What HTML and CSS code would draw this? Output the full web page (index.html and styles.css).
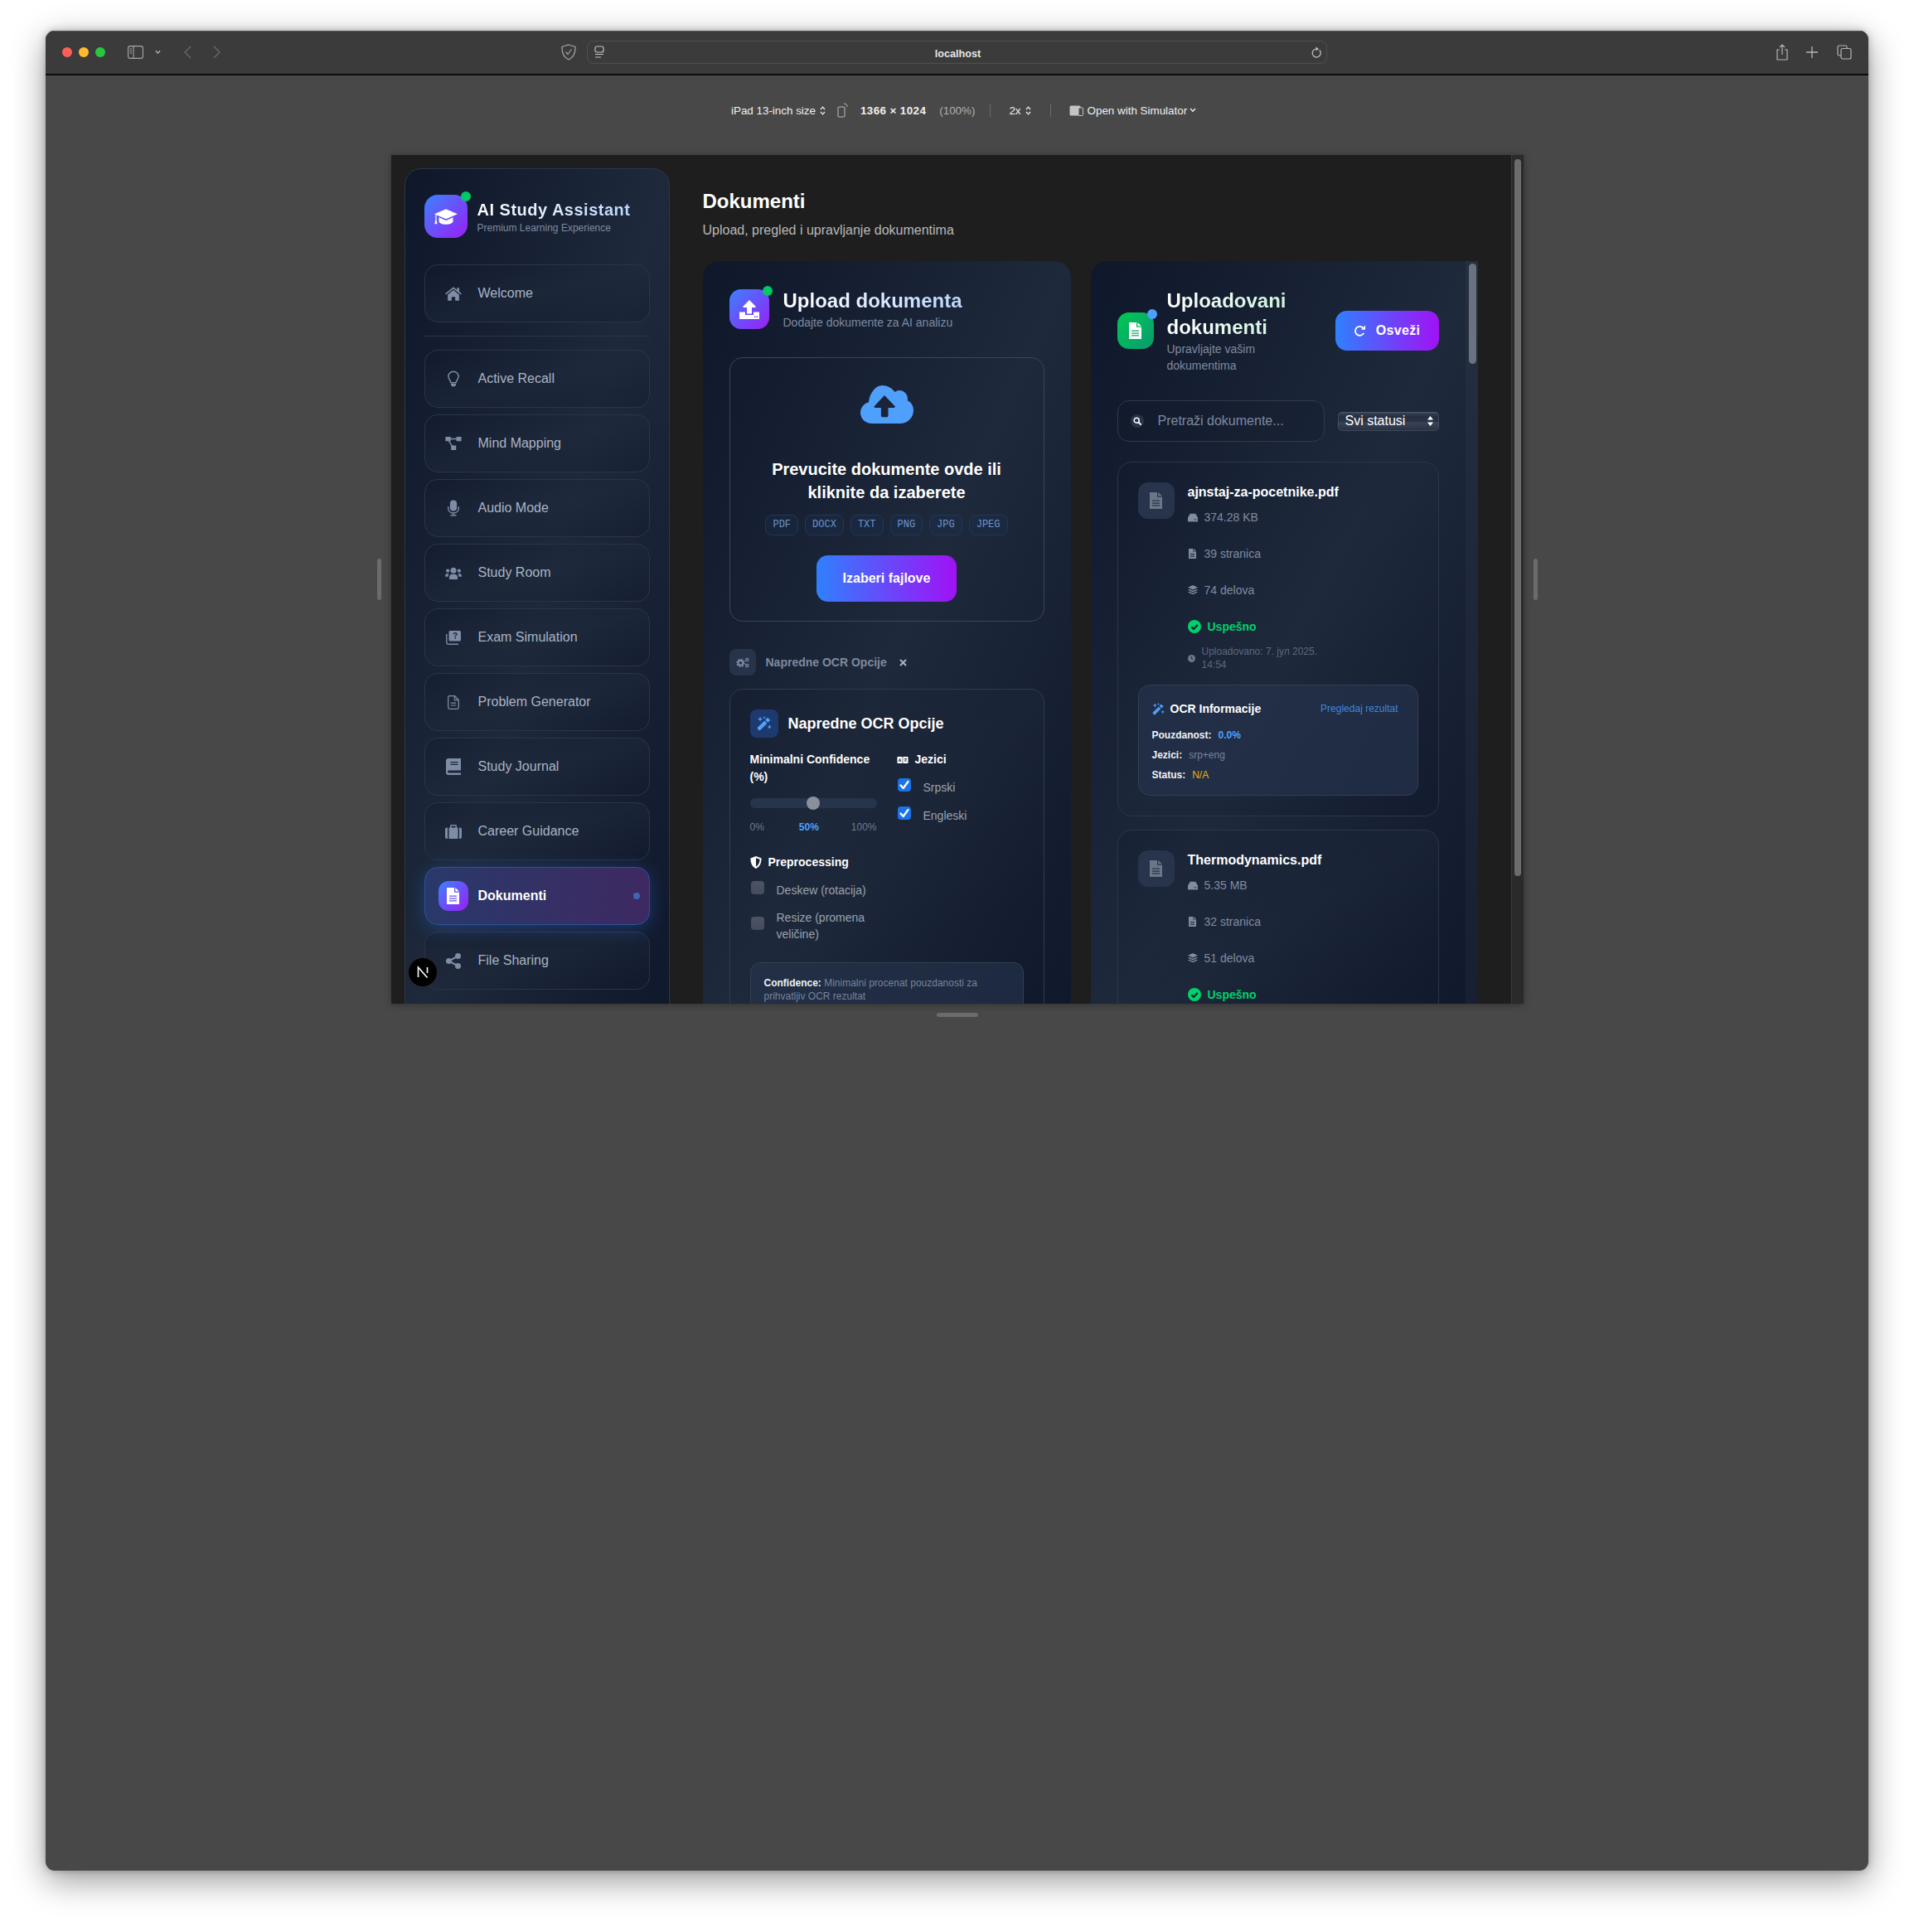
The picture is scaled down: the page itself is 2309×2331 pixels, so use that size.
FILE: index.html
```html
<!DOCTYPE html>
<html lang="sr">
<head>
<meta charset="utf-8">
<title>AI Study Assistant</title>
<link rel="stylesheet" href="styles.css">
</head>
<body>
<svg class="sprite" xmlns="http://www.w3.org/2000/svg">
  <symbol id="i-cap" viewBox="0 0 28 18.500"><path fill="currentColor" d="M14 0 28 6 14 12 0 6zM5.500 10 14 13.800 22.500 10v4.500c0 2.500-4 4-8.500 4s-8.500-1.500-8.500-4z"/><path fill="currentColor" d="M1.300 7h1.200v6l1 5H.3l1-5z"/></symbol>
  <symbol id="i-home" viewBox="0 0 24 20"><path fill="currentColor" d="M12 0 0 9.800l1.300 1.500L12 2.700l10.700 8.600 1.300-1.500-3.600-3V1.300h-3.200v2.900z"/><path fill="currentColor" d="M12 4.700 3.800 11.300V20h5.600v-5.600h5.200V20h5.600v-8.700z"/></symbol>
  <symbol id="i-bulb" viewBox="0 0 16 22"><path fill="none" stroke="currentColor" stroke-width="1.700" d="M8 1C4 1 1 4 1 7.700c0 3.800 3 5.300 3.600 8.800h6.800C12 13 15 11.500 15 7.700 15 4 12 1 8 1z"/><path fill="currentColor" d="M4.600 17.800h6.800v1.700l-1.400 2H6l-1.400-2z"/></symbol>
  <symbol id="i-diagram" viewBox="0 0 24 20"><path fill="currentColor" d="M0 0h8v6.500H0zM16.500 0H24v6.500h-7.500zM8.500 13H16v7H8.500z"/><path fill="none" stroke="currentColor" stroke-width="1.800" d="M7 3.200h10M5 6l5 8"/></symbol>
  <symbol id="i-mic" viewBox="0 0 16 22"><rect x="3.300" width="9.400" height="15" rx="4.700" fill="currentColor"/><path fill="none" stroke="currentColor" stroke-width="1.700" d="M.9 9v2.500c0 3.800 3.200 6.300 7.100 6.300s7.100-2.500 7.100-6.300V9M8 18v3M4 21.100h8"/></symbol>
  <symbol id="i-users" viewBox="0 0 24 18"><circle cx="12" cy="5" r="4.200" fill="currentColor"/><circle cx="3.800" cy="5.500" r="2.600" fill="currentColor"/><circle cx="20.200" cy="5.500" r="2.600" fill="currentColor"/><path fill="currentColor" d="M6 18v-3.500c0-2.500 2-4 4-4h4c2 0 4 1.500 4 4V18zM0 14c0-3 1.500-4.500 3-4.500h2.300C4.700 10.500 4.400 12 4.400 14zM24 14c0-3-1.500-4.500-3-4.500h-2.300c.6 1 .9 2.500.9 4.500z"/></symbol>
  <symbol id="i-exam" viewBox="0 0 18 17"><path fill="currentColor" fill-rule="evenodd" d="M5 0h11.500A1.500 1.500 0 0 1 18 1.500v9.500a1.500 1.500 0 0 1-1.500 1.500H5A1.500 1.500 0 0 1 3.500 11V1.500A1.500 1.500 0 0 1 5 0zm3.500 4.400h1.500c.1-.8.600-1.100 1.100-1.100.6 0 1 .3 1 .9 0 1.100-1.700 1.200-1.700 3h1.400c0-1.200 1.800-1.400 1.800-3.100 0-1.300-1-2.100-2.500-2.100-1.600 0-2.500 1-2.600 2.400zm1.900 3.600v1.500H12V8z"/><path fill="none" stroke="currentColor" stroke-width="1.400" d="M.8 4v10.500c0 1 .7 1.700 1.700 1.700H15"/></symbol>
  <symbol id="i-file-o" viewBox="0 0 14 17"><path fill="none" stroke="currentColor" stroke-width="1.300" d="M2 .7h6.500L13.300 5.500V14.500a1.800 1.800 0 0 1-1.800 1.800H2.500A1.800 1.800 0 0 1 .7 14.500V2.500A1.800 1.800 0 0 1 2 .7z"/><path fill="none" stroke="currentColor" stroke-width="1.200" d="M8.300 1v4.700h4.700M3.800 9.200h6.400M3.800 12h6.400"/></symbol>
  <symbol id="i-book" viewBox="0 0 18 20"><path fill="currentColor" fill-rule="evenodd" d="M3 0h15v14.500H3.500a1.500 1.500 0 0 0 0 3H18V20H3a3 3 0 0 1-3-3V3a3 3 0 0 1 3-3zm2.500 4v1.200h9V4zm0 2.800V8h9V6.800z"/></symbol>
  <symbol id="i-case" viewBox="0 0 20 17"><path fill="currentColor" d="M0 5.500C0 4.500.8 3.500 2 3.500h1v13.500H2c-1.200 0-2-1-2-2zM18 3.500c1.200 0 2 1 2 2v9.500c0 1-.8 2-2 2h-1V3.500zM4.500 3.500H6V1.500C6 .7 6.700 0 7.500 0h5c.8 0 1.500.7 1.500 1.500v2h1.500V17h-11zM7.500 3.500h5V1.500h-5z"/></symbol>
  <symbol id="i-file" viewBox="0 0 15 20"><path fill="currentColor" fill-rule="evenodd" d="M0 0h9v5.700h6V20H0zM3 9.500v1.300h9V9.500zm0 2.900v1.300h9v-1.300zm0 2.900v1.300h9v-1.300z"/><path fill="currentColor" d="M10.300 0 15 4.500h-4.700z"/></symbol>
  <symbol id="i-share" viewBox="0 0 18 19"><circle cx="14.500" cy="3.500" r="3.500" fill="currentColor"/><circle cx="3.500" cy="9.500" r="3.500" fill="currentColor"/><circle cx="14.500" cy="15.500" r="3.500" fill="currentColor"/><path fill="none" stroke="currentColor" stroke-width="2" d="M14.500 3.500 3.500 9.500l11 6"/></symbol>
  <symbol id="i-upload" viewBox="0 0 24 23"><path fill="currentColor" d="M12 0 19.500 7.500v1.500H15v7.500H9V9H4.500V7.500z"/><path fill="currentColor" fill-rule="evenodd" d="M0 14.500h7v3.500h10v-3.500h7V23H0zM18 19.500v1.500h1.500v-1.500zm2.500 0v1.500H22v-1.500z"/></symbol>
  <symbol id="i-cloud" viewBox="0 0 64 46"><path class="cloud-body" d="M14 46C6 46 0 40 0 33c0-6 4-11 10-12.700C11 9 18.500 0 26 0c6.500 0 12 3 15.500 8 1.500-1.200 3.500-2 5.500-2 5.500 0 10 4.500 10 10 0 .8-.1 1.500-.3 2.200C61 20 64 24.500 64 30c0 8.800-7.200 16-16 16z"/><path class="cloud-arrow" d="M29 12 41.500 25c.6.800.1 2-1 2H33.500v9.500c0 1-.8 1.800-1.800 1.800h-5c-1 0-1.800-.8-1.800-1.800V27h-7c-1.100 0-1.600-1.200-1-2z"/></symbol>
  <symbol id="i-cogs" viewBox="0 0 24 20"><circle cx="8" cy="10.500" r="4.500" fill="none" stroke="currentColor" stroke-width="3.200"/><circle cx="8" cy="10.500" r="7" fill="none" stroke="currentColor" stroke-width="2.200" stroke-dasharray="2.700 2.800"/><circle cx="20" cy="4.500" r="2.500" fill="none" stroke="currentColor" stroke-width="2"/><circle cx="20" cy="15.500" r="2.500" fill="none" stroke="currentColor" stroke-width="2"/></symbol>
  <symbol id="i-x" viewBox="0 0 12 12"><path fill="none" stroke="currentColor" stroke-width="2.600" stroke-linecap="round" d="M2 2l8 8M10 2l-8 8"/></symbol>
  <symbol id="i-wand" viewBox="0 0 20 20"><path fill="currentColor" d="M14.500 2 18 5.500l-3.200 3.200-3.500-3.500zM10.300 6.200 13.800 9.700l-8.900 9a1.600 1.600 0 0 1-2.300 0l-1.300-1.300a1.600 1.600 0 0 1 0-2.300z"/><path fill="currentColor" d="M4.500.5 5.500 3l2.500 1-2.500 1-1 2.500-1-2.500-2.500-1 2.500-1zM17 11.500l.9 2.100 2.100.9-2.100.9-.9 2.100-.9-2.100-2.100-.9 2.100-.9zM10 0l.6 1.400 1.400.6-1.400.6-.6 1.400-.6-1.400L8 2l1.400-.6z"/></symbol>
  <symbol id="i-lang" viewBox="0 0 18 11"><rect width="8.600" height="11" rx="1" fill="currentColor"/><rect x="9.400" width="8.600" height="11" rx="1" fill="currentColor"/><path fill="none" class="lang-mark" stroke-width="1.100" d="M2.400 8.300 4.300 2.800l1.900 5.500M3 6.700h2.600M11.500 3.500h4.300M13.600 2.400v1.100M15 3.500c-.4 2-1.600 3.400-3.300 4.300M12.300 5c.6 1.300 1.700 2.300 3.300 2.800"/></symbol>
  <symbol id="i-shield" viewBox="0 0 14 16"><path fill="currentColor" fill-rule="evenodd" d="M7 0 14 2.600c0 5.500-1.500 10.700-7 13.400C1.500 13.300 0 8.100 0 2.600zM7 2.300v11.200c3.500-2 4.800-5.700 4.900-9.500z"/></symbol>
  <symbol id="i-redo" viewBox="0 0 16 16"><path fill="none" stroke="currentColor" stroke-width="2" d="M13 10.500A5.800 5.800 0 1 1 12.300 4"/><path fill="currentColor" d="M9.500 6H15V.5z"/></symbol>
  <symbol id="i-search" viewBox="0 0 12 12"><circle cx="5" cy="5" r="3.600" fill="none" stroke="currentColor" stroke-width="1.800"/><path fill="none" stroke="currentColor" stroke-width="2.200" stroke-linecap="round" d="m8 8 2.800 2.800"/></symbol>
  <symbol id="i-hdd" viewBox="0 0 14 11"><path fill="currentColor" fill-rule="evenodd" d="M3.200 0h7.600L14 5.500V11H0V5.500zM.8 6v3.800h12.400V6z"/><rect y="5.500" width="14" height="5.500" fill="currentColor"/><rect x="9" y="7.500" width="1.200" height="1.300" class="hole"/><rect x="11" y="7.500" width="1.200" height="1.300" class="hole"/></symbol>
  <symbol id="i-layers" viewBox="0 0 14 14"><path fill="currentColor" d="M7 0 14 3.200 7 6.400 0 3.200zM2 5.700 7 8l5-2.300 2 .9-7 3.200-7-3.200zM2 9.100l5 2.300 5-2.300 2 .9-7 3.200L0 10z"/></symbol>
  <symbol id="i-check" viewBox="0 0 16 16"><circle cx="8" cy="8" r="8" fill="currentColor"/><path fill="none" class="check-mark" stroke-width="2.200" d="M4.300 8.200 7 10.900l4.800-5"/></symbol>
  <symbol id="i-clock" viewBox="0 0 10 10"><circle cx="5" cy="5" r="5" fill="currentColor"/><path fill="none" class="clock-hand" stroke-width="1.100" d="M5 2.300V5.200l1.800 1"/></symbol>
  <symbol id="i-tick" viewBox="0 0 16 16"><path fill="none" stroke="#fff" stroke-width="2.300" stroke-linecap="round" stroke-linejoin="round" d="M3.500 8.500 6.700 12l5.800-8"/></symbol>
  <symbol id="i-updown" viewBox="0 0 7 11"><path fill="none" stroke="currentColor" stroke-width="1.200" d="M1 4l2.500-2.800L6 4M1 7l2.500 2.800L6 7"/></symbol>
  <symbol id="i-chev" viewBox="0 0 8 6"><path fill="none" stroke="currentColor" stroke-width="1.300" d="M1 1l3 3.200L7 1"/></symbol>
</svg>

<div class="window">
  <header class="toolbar">
    <div class="lights"><span class="light red"></span><span class="light yellow"></span><span class="light green"></span></div>
    <svg class="tb-sidebar" viewBox="0 0 19 16"><rect x=".6" y=".6" width="17.800" height="14.800" rx="2.500" fill="none" stroke="currentColor" stroke-width="1.100"/><path stroke="currentColor" stroke-width="1.100" d="M7 1v14M2.500 4h2.500M2.500 6.500h2.500M2.500 9h2.500"/></svg>
    <svg class="tb-chev"><use href="#i-chev"/></svg>
    <svg class="tb-back" viewBox="0 0 9 16"><path fill="none" stroke="currentColor" stroke-width="1.200" d="M8 1 1 8l7 7"/></svg>
    <svg class="tb-fwd" viewBox="0 0 9 16"><path fill="none" stroke="currentColor" stroke-width="1.200" d="M1 1l7 7-7 7"/></svg>
    <svg class="tb-shield" viewBox="0 0 18 20"><path fill="none" stroke="currentColor" stroke-width="1.300" d="M9 1 17 3.500c.3 7-1.500 12.500-8 15.500C2.500 16 .7 10.500 1 3.500z"/><path fill="none" stroke="currentColor" stroke-width="1.200" d="M5.500 9.500 8 12.500l4.500-6"/></svg>
    <div class="urlbar">
      <svg class="url-icon" viewBox="0 0 12 16"><rect x="1" y="1" width="10" height="7" rx="2" fill="none" stroke="currentColor" stroke-width="1.200"/><path stroke="currentColor" stroke-width="1.200" d="M1 10.500h10M1 14h7"/></svg>
      <span class="url-text">localhost</span>
      <svg class="url-reload" viewBox="0 0 12 14"><path fill="none" stroke="currentColor" stroke-width="1.200" d="M9.800 4.500A5 5 0 1 1 6 3"/><path fill="currentColor" d="M5.500.5 9 3 5.500 5.500z"/></svg>
    </div>
    <div class="tb-right">
      <svg class="tb-share" viewBox="0 0 14 20"><path fill="none" stroke="currentColor" stroke-width="1.200" d="M4 7H1v12h12V7h-3M7 13V1M4 4l3-3 3 3"/></svg>
      <svg class="tb-plus" viewBox="0 0 14 14"><path stroke="currentColor" stroke-width="1.300" d="M7 0v14M0 7h14"/></svg>
      <svg class="tb-tabs" viewBox="0 0 18 18"><rect x="1" y="1" width="11" height="12" rx="2" fill="none" stroke="currentColor" stroke-width="1.200"/><rect x="5" y="4.500" width="12" height="12.500" rx="2" fill="#3b3b3b" stroke="currentColor" stroke-width="1.200"/></svg>
    </div>
  </header>

  <div class="rdm-bar">
    <span class="rdm-label">iPad 13-inch size</span>
    <svg class="rdm-updown"><use href="#i-updown"/></svg>
    <svg class="rdm-rotate" viewBox="0 0 14 18"><rect x="1" y="5" width="8" height="12" rx="1" fill="none" stroke="currentColor" stroke-width="1"/><path fill="none" stroke="currentColor" stroke-width="1" d="M8 1c2.500 0 4 1.500 4 4"/></svg>
    <span class="rdm-size">1366 × 1024</span>
    <span class="rdm-pct">(100%)</span>
    <span class="rdm-div"></span>
    <span class="rdm-label">2x</span>
    <svg class="rdm-updown"><use href="#i-updown"/></svg>
    <span class="rdm-div rdm-div-wide"></span>
    <svg class="rdm-sim" viewBox="0 0 17 13"><rect x=".5" y=".5" width="13" height="12" rx="1.500" fill="currentColor"/><rect x="11" y="3" width="5.500" height="9.500" rx="1" fill="#484848" stroke="currentColor" stroke-width="1"/></svg>
    <span class="rdm-label">Open with Simulator</span>
    <svg class="rdm-chev"><use href="#i-chev"/></svg>
  </div>

  <div class="device-row">
    <span class="handle-v"></span>
    <div class="device">
      <aside class="sidebar">
        <div class="brand">
          <div class="brand-logo"><svg class="brand-cap"><use href="#i-cap"/></svg><span class="dot dot-green"></span></div>
          <div class="brand-copy">
            <div class="brand-title">AI Study Assistant</div>
            <div class="brand-sub">Premium Learning Experience</div>
          </div>
        </div>
        <a class="nav-item"><span class="nav-icon"><svg class="ni-home"><use href="#i-home"/></svg></span><span>Welcome</span></a>
        <div class="nav-divider"></div>
        <nav class="nav-list">
          <a class="nav-item"><span class="nav-icon"><svg class="ni-bulb"><use href="#i-bulb"/></svg></span><span>Active Recall</span></a>
          <a class="nav-item"><span class="nav-icon"><svg class="ni-diagram"><use href="#i-diagram"/></svg></span><span>Mind Mapping</span></a>
          <a class="nav-item"><span class="nav-icon"><svg class="ni-bulb"><use href="#i-mic"/></svg></span><span>Audio Mode</span></a>
          <a class="nav-item"><span class="nav-icon"><svg class="ni-users"><use href="#i-users"/></svg></span><span>Study Room</span></a>
          <a class="nav-item"><span class="nav-icon"><svg class="ni-exam"><use href="#i-exam"/></svg></span><span>Exam Simulation</span></a>
          <a class="nav-item"><span class="nav-icon"><svg class="ni-fileo"><use href="#i-file-o"/></svg></span><span>Problem Generator</span></a>
          <a class="nav-item"><span class="nav-icon"><svg class="ni-book"><use href="#i-book"/></svg></span><span>Study Journal</span></a>
          <a class="nav-item"><span class="nav-icon"><svg class="ni-case"><use href="#i-case"/></svg></span><span>Career Guidance</span></a>
          <a class="nav-item nav-active"><span class="nav-icon active-icon"><svg class="ni-file"><use href="#i-file"/></svg></span><span class="active-label">Dokumenti</span><span class="active-dot"></span></a>
          <a class="nav-item"><span class="nav-icon"><svg class="ni-share"><use href="#i-share"/></svg></span><span>File Sharing</span></a>
        </nav>
      </aside>

      <main class="main">
        <h1 class="page-title">Dokumenti</h1>
        <p class="page-sub">Upload, pregled i upravljanje dokumentima</p>
        <div class="columns">
          <section class="card upload-card">
            <div class="card-head">
              <div class="head-icon grad-icon"><svg class="hi-upload"><use href="#i-upload"/></svg><span class="dot dot-green"></span></div>
              <div>
                <h2 class="head-title grad-blue">Upload dokumenta</h2>
                <p class="head-sub">Dodajte dokumente za AI analizu</p>
              </div>
            </div>
            <div class="dropzone">
              <svg class="cloud"><use href="#i-cloud"/></svg>
              <p class="drop-text">Prevucite dokumente ovde ili<br>kliknite da izaberete</p>
              <div class="tags"><span class="tag">PDF</span><span class="tag">DOCX</span><span class="tag">TXT</span><span class="tag">PNG</span><span class="tag">JPG</span><span class="tag">JPEG</span></div>
              <button class="btn-primary btn-pick">Izaberi fajlove</button>
            </div>
            <div class="ocr-toggle">
              <span class="toggle-icon"><svg class="ti-cogs"><use href="#i-cogs"/></svg></span>
              <span class="toggle-label">Napredne OCR Opcije</span>
              <svg class="ti-x"><use href="#i-x"/></svg>
            </div>
            <div class="ocr-panel">
              <div class="panel-head">
                <span class="panel-icon"><svg class="pi-wand"><use href="#i-wand"/></svg></span>
                <h3 class="panel-title">Napredne OCR Opcije</h3>
              </div>
              <div class="panel-grid">
                <div>
                  <div class="field-label">Minimalni Confidence (%)</div>
                  <div class="slider"><span class="slider-thumb"></span></div>
                  <div class="slider-scale"><span>0%</span><span class="scale-mid">50%</span><span>100%</span></div>
                </div>
                <div>
                  <div class="field-label field-icon"><svg class="fi-lang"><use href="#i-lang"/></svg>Jezici</div>
                  <div class="checks">
                    <label class="check-row"><span class="cb cb-on"><svg class="tick"><use href="#i-tick"/></svg></span><span>Srpski</span></label>
                    <label class="check-row"><span class="cb cb-on"><svg class="tick"><use href="#i-tick"/></svg></span><span>Engleski</span></label>
                  </div>
                </div>
              </div>
              <div class="prep">
                <div class="field-label field-icon"><svg class="fi-shield"><use href="#i-shield"/></svg>Preprocessing</div>
                <div class="prep-list">
                  <label class="check-row"><span class="cb"></span><span>Deskew (rotacija)</span></label>
                  <label class="check-row"><span class="cb"></span><span>Resize (promena veličine)</span></label>
                </div>
              </div>
              <div class="info-box"><strong>Confidence:</strong> Minimalni procenat pouzdanosti za prihvatljiv OCR rezultat</div>
            </div>
          </section>

          <section class="card docs-card">
            <div class="docs-body">
              <div class="card-head docs-head">
                <div class="head-icon green-icon"><svg class="hi-file"><use href="#i-file"/></svg><span class="dot dot-blue"></span></div>
                <div class="docs-copy">
                  <h2 class="head-title grad-green">Uploadovani dokumenti</h2>
                  <p class="head-sub">Upravljajte vašim dokumentima</p>
                </div>
                <button class="btn-primary btn-refresh"><svg class="bi-redo"><use href="#i-redo"/></svg>Osveži</button>
              </div>
              <div class="filters">
                <div class="search"><span class="search-icon"><svg class="si"><use href="#i-search"/></svg></span><span class="placeholder">Pretraži dokumente...</span></div>
                <div class="select"><span>Svi statusi</span><svg class="sel-arrows" viewBox="0 0 7 12"><path fill="#fff" d="M3.500 0 7 4.500H0zM3.500 12 0 7.500h7z"/></svg></div>
              </div>
              <article class="doc">
                <div class="doc-row">
                  <span class="doc-icon"><svg class="di-file"><use href="#i-file"/></svg></span>
                  <div class="doc-info">
                    <h4 class="doc-name">ajnstaj-za-pocetnike.pdf</h4>
                    <div class="meta"><svg class="m-hdd"><use href="#i-hdd"/></svg>374.28 KB</div>
                    <div class="meta"><svg class="m-file"><use href="#i-file"/></svg>39 stranica</div>
                    <div class="meta"><svg class="m-layers"><use href="#i-layers"/></svg>74 delova</div>
                    <div class="status"><svg class="m-check"><use href="#i-check"/></svg>Uspešno</div>
                    <div class="uploaded"><svg class="m-clock"><use href="#i-clock"/></svg><span class="uploaded-text">Uploadovano: 7. јул 2025. 14:54</span></div>
                  </div>
                </div>
                <div class="ocr-box">
                  <div class="ocr-top"><span class="ocr-title"><svg class="o-wand"><use href="#i-wand"/></svg>OCR Informacije</span><a class="ocr-link">Pregledaj rezultat</a></div>
                  <div class="ocr-line"><b>Pouzdanost:</b><span class="val-blue">0.0%</span></div>
                  <div class="ocr-line"><b>Jezici:</b><span>srp+eng</span></div>
                  <div class="ocr-line"><b>Status:</b><span class="val-gold">N/A</span></div>
                </div>
              </article>
              <article class="doc">
                <div class="doc-row">
                  <span class="doc-icon"><svg class="di-file"><use href="#i-file"/></svg></span>
                  <div class="doc-info">
                    <h4 class="doc-name">Thermodynamics.pdf</h4>
                    <div class="meta"><svg class="m-hdd"><use href="#i-hdd"/></svg>5.35 MB</div>
                    <div class="meta"><svg class="m-file"><use href="#i-file"/></svg>32 stranica</div>
                    <div class="meta"><svg class="m-layers"><use href="#i-layers"/></svg>51 delova</div>
                    <div class="status"><svg class="m-check"><use href="#i-check"/></svg>Uspešno</div>
                  </div>
                </div>
              </article>
            </div>
            <div class="docs-track"><span class="docs-thumb"></span></div>
          </section>
        </div>
      </main>

      <div class="page-track"><span class="page-thumb"></span></div>
      <div class="next-badge"><svg class="next-n" viewBox="0 0 18 18"><path fill="none" stroke="#fff" stroke-width="1.600" d="M3.500 15V3l11 12.500M14.500 3v7"/></svg></div>
    </div>
    <span class="handle-v"></span>
  </div>
  <div class="handle-h"></div>
</div>
</body>
</html>
```
FILE: styles.css
```css
* { box-sizing: border-box; }
html, body { margin: 0; padding: 0; }
body { background: #fff; padding: 37px 55px 74px; font-family: "Liberation Sans", Arial, sans-serif; }
h1, h2, h3, h4, p { margin: 0; }
.sprite { display: none; }
svg { display: block; flex: none; }

.window { width: 2199px; height: 2220px; background: #484848; border-radius: 11px; overflow: hidden; box-shadow: 0 12px 40px rgba(0,0,0,.4), 0 0 10px rgba(0,0,0,.25); }

.toolbar { height: 54px; background: #3b3b3b; border-bottom: 2px solid #0c0c0c; box-shadow: inset 0 1px 0 #5c5c5c; display: flex; align-items: center; color: #a8a8a8; padding-left: 20px; }
.lights { display: flex; gap: 8px; }
.light { width: 12px; height: 12px; border-radius: 50%; }
.red { background: #ff5f57; }
.yellow { background: #febc2e; }
.green { background: #28c840; }
.tb-sidebar { width: 19px; height: 16px; margin-left: 27px; }
.tb-chev { width: 7px; height: 6px; margin-left: 14px; color: #bbb; }
.tb-back { width: 9px; height: 16px; margin-left: 28px; color: #6d6d6d; }
.tb-fwd { width: 9px; height: 16px; margin-left: 26px; color: #6d6d6d; }
.tb-shield { width: 18px; height: 20px; margin-left: 411px; color: #a0a0a0; }
.urlbar { width: 893px; height: 28px; margin-left: 13px; border: 1px solid #505050; border-radius: 8px; display: flex; align-items: center; padding: 0 6px 0 8px; }
.url-icon { width: 12px; height: 16px; color: #c4c4c4; }
.url-text { flex: 1; text-align: center; font-size: 12.600px; font-weight: 700; padding-top: 3px; color: #e6e6e6; }
.url-reload { width: 12px; height: 14px; color: #c4c4c4; }
.tb-right { display: flex; align-items: center; margin-left: auto; padding-right: 20px; color: #b5b5b5; }
.tb-share { width: 14px; height: 20px; }
.tb-plus { width: 14px; height: 14px; margin-left: 22px; }
.tb-tabs { width: 18px; height: 18px; margin-left: 23px; }

.rdm-bar { height: 20px; margin-top: 32px; padding-left: 827px; display: flex; align-items: center; color: #f0f0f0; font-size: 13.400px; }
.rdm-label { font-weight: 400; }
.rdm-updown { width: 7px; height: 11px; margin-left: 5px; }
.rdm-rotate { width: 14px; height: 18px; margin-left: 14px; color: #bdbdbd; }
.rdm-size { font-weight: 700; margin-left: 14px; letter-spacing: .4px; }
.rdm-pct { color: #b0b0b0; margin-left: 16px; }
.rdm-div { width: 1px; height: 16px; background: #6a6a6a; margin: 0 22px 0 18px; }
.rdm-div-wide { margin-left: 23px; margin-right: 22px; }
.rdm-sim { width: 17px; height: 13px; margin-right: 5px; color: #c4c4c4; }
.rdm-chev { width: 8px; height: 6px; margin-left: 3px; }

.device-row { display: flex; justify-content: center; align-items: center; gap: 12px; margin-top: 44px; }
.handle-v { width: 5px; height: 50px; border-radius: 3px; background: #6b6b6b; }
.handle-h { width: 50px; height: 5px; border-radius: 3px; background: #6b6b6b; margin: 11px auto 0; }

.device { width: 1366px; height: 1024px; flex: none; background: #1e1e1e; position: relative; overflow: hidden; display: flex; align-items: flex-start; box-shadow: 0 1px 8px rgba(0,0,0,.35); }

.sidebar { width: 320px; flex: none; margin: 16px 0 0 16px; padding: 31px 23px 90px; border: 1px solid #2c3648; border-radius: 20px; background: linear-gradient(to bottom right, #0f172a, #1e293b 50%, #0f172a); }
.brand { display: flex; align-items: center; gap: 12px; margin-bottom: 32px; }
.brand-logo { width: 52px; height: 52px; border-radius: 16px; background: linear-gradient(135deg, #3b82ff, #9a1ff5); display: flex; align-items: center; justify-content: center; position: relative; }
.brand-cap { width: 28px; height: 19px; color: #fff; }
.dot { position: absolute; width: 12px; height: 12px; border-radius: 50%; top: -4px; right: -4px; }
.dot-green { background: #00c864; }
.dot-blue { background: #4f9ffd; }
.brand-title { font-size: 20px; line-height: 28px; font-weight: 700; letter-spacing: .5px; background: linear-gradient(90deg, #fff, #bcd7ff); -webkit-background-clip: text; background-clip: text; color: transparent; }
.brand-sub { font-size: 12px; line-height: 16px; color: #7e8aa0; }

.nav-item { display: flex; align-items: center; height: 70px; padding: 0 16px; gap: 12px; border: 1px solid #2b3547; border-radius: 16px; background: linear-gradient(to bottom right, rgba(15,23,42,.3), rgba(30,41,59,.5) 50%, rgba(15,23,42,.3)); color: #aab4c5; font-size: 16px; }
.nav-divider { height: 1px; background: #2b3547; margin: 16px 0; }
.nav-list { display: flex; flex-direction: column; gap: 8px; }
.nav-icon { width: 36px; height: 36px; display: flex; align-items: center; justify-content: center; color: #7f8ca5; flex: none; }
.ni-home { width: 20px; height: 17px; }
.ni-bulb { width: 14px; height: 20px; }
.ni-diagram { width: 20px; height: 16px; }
.ni-users { width: 20px; height: 15px; }
.ni-exam { width: 18px; height: 17px; }
.ni-fileo { width: 14px; height: 17px; }
.ni-book { width: 18px; height: 20px; }
.ni-case { width: 20px; height: 17px; }
.ni-share { width: 18px; height: 19px; }
.ni-file { width: 15px; height: 20px; color: #fff; }
.nav-active { position: relative; z-index: 1; background: linear-gradient(90deg, #29396a, #3e2962); border-color: #2a52a0; box-shadow: 0 4px 22px rgba(45,110,230,.33); }
.active-icon { background: linear-gradient(135deg, #3b82ff, #9a1ff5); border-radius: 12px; }
.active-label { color: #fff; font-weight: 700; }
.active-dot { width: 8px; height: 8px; border-radius: 50%; background: #3f66b6; margin-left: auto; margin-right: -5px; }

.main { width: 975px; flex: none; margin-left: 40px; padding-top: 40px; padding-right: 40px; color: #fff; }
.page-title { font-size: 24px; line-height: 32px; font-weight: 700; }
.page-sub { font-size: 16px; line-height: 24px; margin-top: 7px; color: #b8b8b8; }
.columns { display: grid; grid-template-columns: 444px 467px; gap: 24px; margin-top: 25px; }
.card { height: 969px; background: linear-gradient(to bottom right, #0f172a, #1e293b 50%, #0f172a); }
.upload-card { padding: 32px; border-radius: 20px; }
.card-head { display: flex; align-items: center; gap: 17px; margin-bottom: 32px; }
.head-icon { width: 48px; height: 48px; border-radius: 14px; display: flex; align-items: center; justify-content: center; position: relative; flex: none; }
.grad-icon { background: linear-gradient(135deg, #3b82ff, #9a1ff5); }
.green-icon { width: 44px; height: 44px; background: linear-gradient(135deg, #00c853, #0a9a70); }
.hi-upload { width: 24px; height: 23px; color: #fff; }
.hi-file { width: 15px; height: 20px; color: #fff; }
.head-title { font-size: 24px; line-height: 32px; font-weight: 700; color: transparent; -webkit-background-clip: text; background-clip: text; }
.grad-blue { background-image: linear-gradient(90deg, #fff, #bcd7ff); display: block; width: fit-content; }
.grad-green { background-image: linear-gradient(90deg, #fff, #bff0d0); }
.head-sub { font-size: 14px; line-height: 20px; color: #7e8aa0; }

.dropzone { height: 319px; border: 1.5px solid #3c4557; border-radius: 16px; display: flex; flex-direction: column; align-items: center; padding-top: 33px; }
.cloud { width: 64px; height: 46px; }
.cloud-body { fill: #4f9ffd; }
.cloud-arrow { fill: #1a2338; }
.drop-text { font-size: 20px; line-height: 28px; font-weight: 700; text-align: center; margin-top: 41px; }
.tags { display: flex; gap: 8px; margin-top: 13px; }
.tag { height: 25px; padding: 0 8px; border: 1px solid #22365a; border-radius: 8px; background: rgba(30,58,110,.15); font: 12px/23px "Liberation Mono", monospace; color: #6b96d0; }
.btn-primary { border: 0; color: #fff; font: 700 16px "Liberation Sans", Arial, sans-serif; background: linear-gradient(90deg, #2f80ff, #a012f5); border-radius: 14px; }
.btn-pick { width: 169px; height: 56px; margin-top: 24px; }

.ocr-toggle { display: flex; align-items: center; margin-top: 33px; color: #7e8aa0; }
.toggle-icon { width: 32px; height: 32px; border-radius: 8px; background: #273349; display: flex; align-items: center; justify-content: center; }
.ti-cogs { width: 16px; height: 13px; color: #7e8aa0; }
.toggle-label { font-size: 14px; font-weight: 700; margin-left: 12px; }
.ti-x { width: 9px; height: 9px; margin-left: 15px; color: #aeb6c4; }

.ocr-panel { margin-top: 16px; padding: 24px; border: 1px solid #2f3a4e; border-radius: 16px; background: linear-gradient(to bottom right, rgba(15,23,42,.25), rgba(30,41,59,.35) 50%, rgba(15,23,42,.5)); }
.panel-head { display: flex; align-items: center; gap: 12px; }
.panel-icon { width: 34px; height: 34px; border-radius: 8px; background: #1d3a6e; display: flex; align-items: center; justify-content: center; }
.pi-wand { width: 18px; height: 18px; color: #4f9ffd; }
.panel-title { font-size: 18px; line-height: 24px; font-weight: 700; }
.panel-grid { display: grid; grid-template-columns: 153px 153px; gap: 24px; margin-top: 16px; }
.field-label { font-size: 14px; line-height: 21px; font-weight: 700; }
.field-icon { display: flex; align-items: center; gap: 8px; }
.fi-lang { width: 14px; height: 8px; color: #fff; }
.lang-mark { stroke: #1a2338; }
.fi-shield { width: 14px; height: 15px; }
.slider { height: 12px; margin-top: 15px; border-radius: 6px; background: #26354c; display: flex; align-items: center; padding-left: 68px; }
.slider-thumb { width: 16px; height: 16px; border-radius: 50%; background: #8a909c; }
.slider-scale { display: flex; justify-content: space-between; margin-top: 14px; font-size: 12px; line-height: 18px; color: #6f7b90; }
.scale-mid { color: #4f9ffd; font-weight: 700; margin-left: 3px; }
.checks { display: flex; flex-direction: column; gap: 12px; margin-top: 12px; }
.check-row { display: flex; align-items: center; font-size: 14px; line-height: 20px; color: #9aa3b2; }
.cb { width: 16px; height: 16px; border-radius: 4px; margin: 0 15px 6px 1px; background: linear-gradient(#4d5364, #464c5d); flex: none; }
.cb-on { background: #1a73e8; }
.tick { width: 16px; height: 16px; }
.prep { width: 153px; margin-top: 23px; }
.prep-list { display: flex; flex-direction: column; gap: 12px; margin-top: 12px; }
.info-box { margin-top: 24px; padding: 16px; border: 1px solid #333e52; border-radius: 12px; background: rgba(37,50,75,.65); font-size: 12px; line-height: 16px; color: #77839a; }
.info-box strong { color: #eef1f5; }

.docs-card { display: flex; overflow: hidden; border-radius: 20px 0 0 20px; }
.docs-body { flex: 1; min-width: 0; padding: 32px; }
.docs-track { width: 15px; flex: none; background: rgba(255,255,255,.03); padding: 3px 2px 0 4px; }
.docs-thumb { display: block; width: 9px; height: 121px; border-radius: 5px; background: #6a7280; }
.docs-head { gap: 16px; margin-bottom: 32px; }
.docs-copy { flex: 1; }
.btn-refresh { width: 125px; height: 48px; display: flex; align-items: center; justify-content: center; gap: 12px; letter-spacing: .3px; flex: none; }
.bi-redo { width: 15px; height: 15px; color: #fff; }
.filters { display: flex; align-items: center; gap: 16px; margin-bottom: 24px; }
.search { flex: 1; height: 50px; border: 1px solid #2f3a4e; border-radius: 14px; display: flex; align-items: center; padding-left: 15px; background: rgba(15,23,42,.2); }
.search-icon { width: 16px; height: 16px; border-radius: 50%; background: #28344a; display: flex; align-items: center; justify-content: center; color: #fff; }
.si { width: 10px; height: 10px; }
.placeholder { margin-left: 17px; font-size: 16px; color: #7e8aa0; }
.select { width: 122px; height: 23px; flex: none; display: flex; align-items: center; justify-content: space-between; padding: 0 7px 0 9px; border-radius: 5px; font-size: 16px; color: #fff; background: linear-gradient(#3e4759, #262f42 25%, #2a3346 50%, #3a4356 56%, #283144); box-shadow: inset 0 0 0 1px rgba(255,255,255,.1); }
.sel-arrows { width: 7px; height: 14px; }

.doc { padding: 24px; border: 1px solid #2c3648; border-radius: 18px; margin-bottom: 16px; background: linear-gradient(to bottom right, rgba(15,23,42,.25), rgba(30,41,59,.4) 50%, rgba(15,23,42,.4)); }
.doc-row { display: flex; gap: 16px; }
.doc-icon { width: 44px; height: 44px; border-radius: 12px; background: #27344b; display: flex; align-items: center; justify-content: center; flex: none; }
.di-file { width: 15px; height: 20px; color: #6c7688; }
.doc-info { display: flex; flex-direction: column; gap: 24px; min-width: 0; }
.doc-name { font-size: 16px; line-height: 24px; font-weight: 700; margin-bottom: -16px; }
.meta { display: flex; align-items: center; gap: 8px; font-size: 14px; line-height: 20px; color: #808ca2; }
.m-hdd { width: 12px; height: 11px; color: #808ca2; }
.m-layers { width: 12px; height: 12px; color: #808ca2; }
.hole { fill: #1c2739; }
.m-file { width: 9px; height: 12px; margin-left: 1px; margin-right: 2px; color: #808ca2; }
.status { display: flex; align-items: center; gap: 8px; font-size: 14px; line-height: 20px; font-weight: 700; color: #00d26a; }
.m-check { width: 16px; height: 16px; }
.check-mark { stroke: #15203a; }
.uploaded { display: flex; align-items: center; gap: 8px; font-size: 12px; line-height: 16px; color: #5c687d; margin-top: -12px; margin-bottom: 16px; }
.m-clock { width: 9px; height: 9px; color: #6b768a; }
.clock-hand { stroke: #1c2739; }
.uploaded-text { width: 150px; }
.ocr-box { padding: 16px; height: 134px; border: 1px solid #333e52; border-radius: 14px; background: rgba(37,50,75,.7); }
.ocr-top { display: flex; align-items: center; justify-content: space-between; height: 24px; margin-bottom: 12px; }
.ocr-title { display: flex; align-items: center; gap: 7px; font-size: 14px; font-weight: 700; }
.o-wand { width: 15px; height: 15px; color: #4f9ffd; }
.ocr-link { font-size: 12px; color: #3f86de; margin-right: 7px; }
.ocr-line { display: flex; gap: 8px; height: 24px; font-size: 12px; line-height: 16px; color: #77839a; }
.ocr-line b { color: #f1f3f6; }
.val-blue { color: #4f9ffd; font-weight: 700; }
.val-gold { color: #eab308; }

.page-track { width: 15px; height: 100%; flex: none; margin-left: auto; background: #2a2a2a; border-left: 1px solid #3a3a3a; padding: 5px 3px 0; }
.page-thumb { display: block; width: 8px; height: 865px; border-radius: 4px; background: #6c6c6c; }
.next-badge { position: absolute; left: 20px; bottom: 20px; width: 36px; height: 36px; border-radius: 50%; background: #000; border: 1px solid #2a2a2a; display: flex; align-items: center; justify-content: center; }
.next-n { width: 18px; height: 18px; }
```
